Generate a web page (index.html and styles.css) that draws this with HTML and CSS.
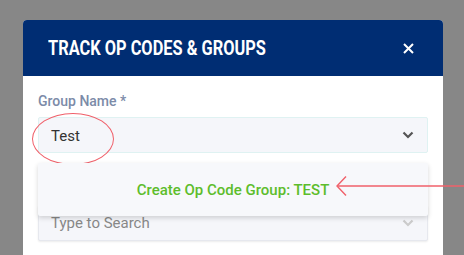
FILE: index.html
```html
<!DOCTYPE html>
<html lang="en">
<head>
  <meta charset="UTF-8" />
  <title>Track Op Codes & Groups</title>
  <link rel="stylesheet" href="styles.css">
</head>
<body>
  <div class="modal">
    <div class="modal-header">
      <h2>TRACK OP CODES &amp; GROUPS</h2>
      <svg class="close" width="11" height="11" viewBox="0 0 11 11"><path d="M1 1 L10 10 M10 1 L1 10" stroke="#fff" stroke-width="2"/></svg>
    </div>
    <div class="modal-body">
      <label class="field-label">Group Name *</label>
      <div class="select-wrap">
        <div class="select">
          <span class="value">Test</span>
          <svg class="chev" width="12" height="8" viewBox="0 0 12 8"><path d="M1.5 1.5 L6 6 L10.5 1.5" fill="none" stroke="#555" stroke-width="2.2"/></svg>
        </div>
        <span class="ring"></span>
        <div class="menu">
          <div class="option">Create Op Code Group: TEST</div>
        </div>
      </div>
      <div class="select second">
        <span class="placeholder">Type to Search</span>
        <svg class="chev" width="12" height="8" viewBox="0 0 12 8"><path d="M1.5 1.5 L6 6 L10.5 1.5" fill="none" stroke="#ccc" stroke-width="2.2"/></svg>
      </div>
    </div>
  </div>

  <svg class="arrow" width="130" height="24" viewBox="0 0 130 24">
    <path d="M2 11 H130" stroke="#f0606a" stroke-width="1.6" fill="none"/>
    <path d="M10 1.5 L1 11 L10 20.5" stroke="#f0606a" stroke-width="1.4" fill="none"/>
  </svg>
</body>
</html>
```

FILE: styles.css
```css
body {
  margin: 0;
  background: #878787;
  font-family: Roboto, 'Noto Sans', sans-serif;
  width: 464px;
  height: 255px;
  overflow: hidden;
  position: relative;
}
.modal {
  margin: 20px 0 0 23px;
  width: 420px;
  height: 235px;
  background: #fff;
  border-radius: 4px 4px 0 0;
}
.modal-header {
  background: #002d73;
  height: 56px;
  border-radius: 4px 4px 0 0;
  display: flex;
  align-items: center;
  justify-content: space-between;
  padding: 0 29px 0 25px;
}
.modal-header h2 {
  margin: 0;
  color: #fff;
  font-family: Roboto, sans-serif;
  font-size: 19.5px;
  font-weight: 700;
  transform: scaleX(0.84);
  transform-origin: left center;
  white-space: nowrap;
}
.modal-body {
  padding: 17px 15px 0 15px;
}
.field-label {
  display: block;
  color: #7c8ba8;
  font-size: 14px;
  font-weight: 500;
  margin-bottom: 8px;
}
.select-wrap {
  position: relative;
}
.select {
  height: 34px;
  background: #f5f6fa;
  border: 1px solid #dff2f2;
  border-radius: 2px;
  display: flex;
  align-items: center;
  justify-content: space-between;
  padding: 0 13px 0 12px;
}
.value {
  color: #333;
  font-size: 15px;
  padding-top: 2px;
}
.second {
  margin-top: 52px;
  border-color: #e6e8ee;
  box-shadow: 0 1px 2px rgba(0,0,0,0.08);
}
.placeholder {
  color: #888;
  font-size: 15px;
}
.ring {
  position: absolute;
  left: -6px;
  top: -4px;
  width: 80px;
  height: 50px;
  border: 1px solid #f0606a;
  border-radius: 50%;
}
.menu {
  position: absolute;
  left: 0;
  right: 0;
  top: 46px;
  height: 53px;
  background: #f7f8fb;
  box-shadow: 0 2px 5px rgba(0,0,0,0.16);
  border-radius: 2px;
  z-index: 2;
  display: flex;
  align-items: center;
  justify-content: center;
}
.option {
  color: #5dbd2b;
  font-size: 15px;
  font-weight: 500;
}
.arrow {
  position: absolute;
  left: 336px;
  top: 175px;
  z-index: 3;
}
```
